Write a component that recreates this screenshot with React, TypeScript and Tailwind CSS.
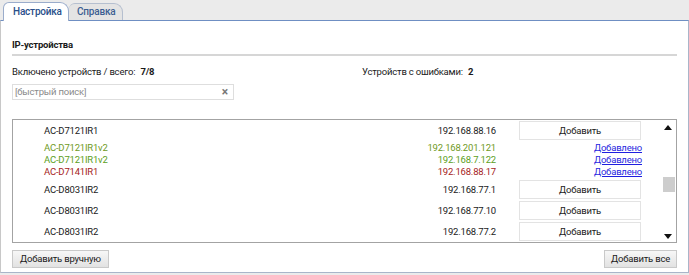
const rows = [
  { name: "AC-D7121IR1", ip: "192.168.88.16", kind: "add" },
  { name: "AC-D7121IR1v2", ip: "192.168.201.121", kind: "ok1" },
  { name: "AC-D7121IR1v2", ip: "192.168.7.122", kind: "ok2" },
  { name: "AC-D7141IR1", ip: "192.168.88.17", kind: "err" },
  { name: "AC-D8031IR2", ip: "192.168.77.1", kind: "add" },
  { name: "AC-D8031IR2", ip: "192.168.77.10", kind: "add" },
  { name: "AC-D8031IR2", ip: "192.168.77.2", kind: "add" },
];

function Row({ name, ip, kind }: { name: string; ip: string; kind: string }) {
  const color =
    kind === "ok1"
      ? "text-[#6f9a24]"
      : kind === "ok2"
      ? "text-[#5c9e22]"
      : kind === "err"
      ? "text-[#a52222]"
      : "text-[#1a1a1a]";
  if (kind === "add") {
    return (
      <div className="flex h-[21px] items-center">
        <div className={`w-[300px] pl-[31px] ${color}`}>{name}</div>
        <div className={`w-[183px] text-right ${color}`}>{ip}</div>
        <button className="ml-[23px] h-[19px] w-[122px] border border-[#e3e3e3] bg-white text-[#1a1a1a]">
          Добавить
        </button>
      </div>
    );
  }
  return (
    <div className="flex h-[12px] items-center">
      <div className={`w-[300px] pl-[31px] ${color}`}>{name}</div>
      <div className={`w-[183px] text-right ${color}`}>{ip}</div>
      <div className="ml-[23px] w-[123px] text-right text-[#1f1fe0] underline">Добавлено</div>
    </div>
  );
}

export default function App() {
  return (
    <div className="h-[275px] w-[689px] bg-[#ebebeb] font-['Roboto',sans-serif] text-[9.5px] leading-[12px] tracking-[-0.2px] text-[#1a1a1a]">
      <div className="flex h-[20px] items-end pl-[3px]">
        <div className="relative z-10 -mb-px flex h-[19px] w-[66px] items-center rounded-t-[6px] rounded-tr-[9px] border border-b-0 border-[#9aaccb] bg-white pl-[9px] text-[10px] font-medium text-[#2a4f8a]">
          Настройка
        </div>
        <div className="flex h-[17px] w-[54px] items-center rounded-t-[6px] rounded-tr-[9px] border border-b-0 border-l-0 border-[#b5bfcf] bg-[#e4e4e4] pl-[8px] text-[10px] font-medium text-[#3d5f92]">
          Справка
        </div>
      </div>
      <div className="flex h-[253px] flex-col border border-[#a9b5c9] border-l-[#c8c8c8] border-t-[#6f8fc3] bg-white px-[11px]">
        <div className="mt-[18px] pb-[3px] font-bold text-[#1a1a1a]">IP-устройства</div>
        <div className="h-[2px] bg-[#d6d6d6]" />
        <div className="mt-[10px] flex">
          <div className="w-[350px]">
            Включено устройств / всего: <span className="ml-[3px] font-bold">7/8</span>
          </div>
          <div>
            Устройств с ошибками: <span className="ml-[3px] font-bold">2</span>
          </div>
        </div>
        <div className="mt-[6px] flex h-[16px] w-[222px] items-center justify-between border border-[#dedede] pl-[2px] pr-[5px] text-[#8a8a8a]">
          <span>[быстрый поиск]</span>
          <span className="text-[12px] font-bold text-[#777]">×</span>
        </div>
        <div className="mt-[19px] flex h-[124px] border border-[#a3a3a3]">
          <div className="flex-1 overflow-hidden">
            {rows.map((r, i) => (
              <div key={i} className={i === 1 ? "mt-px" : i === 4 ? "mt-px" : ""}>
                <Row {...r} />
              </div>
            ))}
          </div>
          <div className="mr-px flex w-[15px] flex-col items-center pt-[5px]">
            <svg width="8" height="5" viewBox="0 0 8 5"><path d="M0 5 L4 0 L8 5 Z" fill="#111" /></svg>
            <div className="ml-[2px] mt-[47px] h-[15px] w-[12px] bg-[#cdcdcd]" />
            <svg className="mt-[42px]" width="8" height="5" viewBox="0 0 8 5"><path d="M0 0 L4 5 L8 0 Z" fill="#111" /></svg>
          </div>
        </div>
        <div className="mt-[7px] flex justify-between">
          <button className="h-[18px] border border-[#c9c9c9] bg-gradient-to-b from-[#f7f7f7] to-[#e2e2e2] px-[7px] text-[#1a1a1a]">
            Добавить вручную
          </button>
          <button className="h-[18px] border border-[#c9c9c9] bg-gradient-to-b from-[#f7f7f7] to-[#e2e2e2] px-[6px] text-[#1a1a1a]">
            Добавить все
          </button>
        </div>
      </div>
    </div>
  );
}
